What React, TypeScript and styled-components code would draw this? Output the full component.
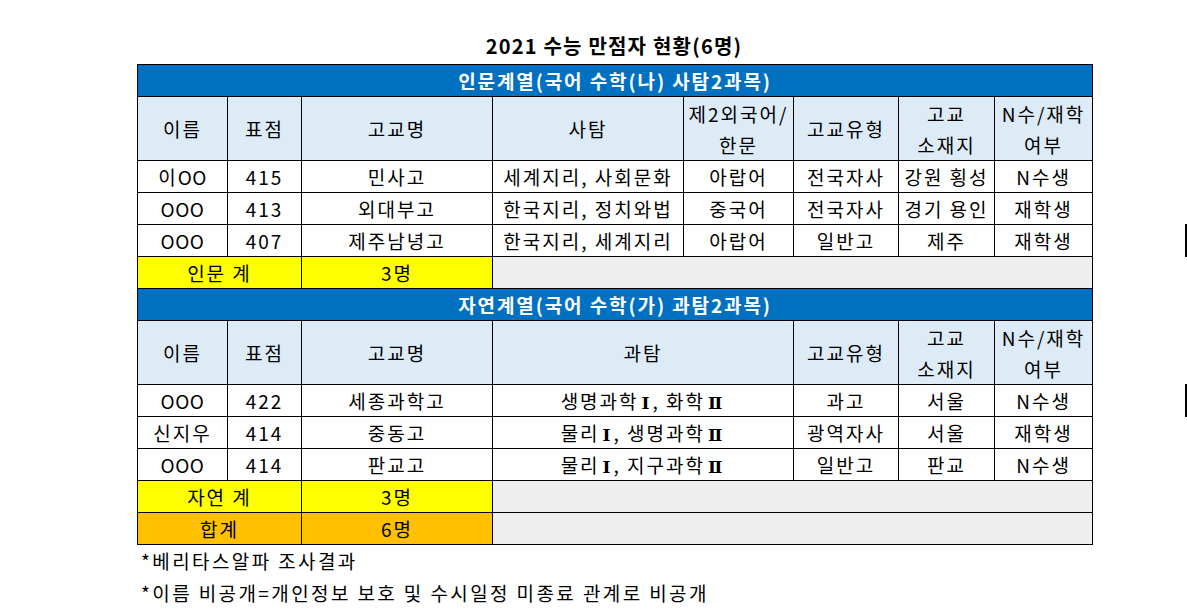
import { FunctionComponent, ReactNode } from "react";
import styled, { createGlobalStyle } from "styled-components";

const GlobalStyle = createGlobalStyle`
  html, body {
    margin: 0;
    padding: 0;
    background: #ffffff;
  }
  body {
    font-family: "Noto Sans CJK KR", "Noto Sans", sans-serif;
    color: #000000;
  }
`

const Page = styled.div`
  position: relative;
  width: 1187px;
  height: 609px;
  padding: 32px 0 0 137px;
  box-sizing: border-box;
`
const Title = styled.div`
  width: 954px;
  height: 32px;
  line-height: 28px;
  text-align: center;
  font-size: 20px;
  font-weight: 700;
  letter-spacing: 1.2px;
`
const Table = styled.table`
  width: 955px;
  border-collapse: collapse;
  table-layout: fixed;
  font-size: 19px;
  letter-spacing: 2px;
`
const Cell = styled.td<{ $bg?: string }>`
  height: 31px;
  padding: 0;
  border: 1px solid #000000;
  background: ${props => props.$bg || "#ffffff"};
  text-align: center;
  line-height: 30px;
  white-space: nowrap;
  overflow: hidden;
`
const Section = styled.td`
  height: 31px;
  padding: 0;
  border: 1px solid #000000;
  background: #0070c0;
  color: #ffffff;
  font-weight: 700;
  font-size: 19px;
  letter-spacing: 1.9px;
  text-align: center;
  line-height: 30px;
`
const Head = styled.td`
  height: 63px;
  padding: 0;
  border: 1px solid #000000;
  background: #ddebf7;
  text-align: center;
  line-height: 31px;
  white-space: nowrap;
`
const Latin = styled.span`
  letter-spacing: 0.5px;
`
const Numeral = styled.span`
  display: inline-block;
  height: 20px;
  line-height: 20px;
  vertical-align: baseline;
  font-family: "DejaVu Serif", "Liberation Serif", serif;
  font-weight: 600;
  font-size: 17px;
  letter-spacing: 0;
  padding: 0 3px;
`
const Note = styled.div`
  height: 32px;
  line-height: 32px;
  padding-left: 4px;
  font-size: 19px;
  letter-spacing: 2.4px;
`
const EdgeMark = styled.span<{ $top: number }>`
  position: absolute;
  left: 1185px;
  top: ${props => props.$top}px;
  width: 2px;
  height: 33px;
  background: #000000;
`

const widths = [90, 74, 191, 191, 110, 105, 96, 98];

const humanities: ReactNode[][] = [
  [<>이<Latin>OO</Latin></>, "415", "민사고", "세계지리, 사회문화", "아랍어", "전국자사", "강원 횡성", "N수생"],
  [<Latin>OOO</Latin>, "413", "외대부고", "한국지리, 정치와법", "중국어", "전국자사", "경기 용인", "재학생"],
  [<Latin>OOO</Latin>, "407", "제주남녕고", "한국지리, 세계지리", "아랍어", "일반고", "제주", "재학생"],
];

const I = <Numeral>Ⅰ</Numeral>;
const II = <Numeral>Ⅱ</Numeral>;

const science: ReactNode[][] = [
  [<Latin>OOO</Latin>, "422", "세종과학고", <>생명과학{I}, 화학{II}</>, "과고", "서울", "N수생"],
  ["신지우", "414", "중동고", <>물리{I}, 생명과학{II}</>, "광역자사", "서울", "재학생"],
  [<Latin>OOO</Latin>, "414", "판교고", <>물리{I}, 지구과학{II}</>, "일반고", "판교", "N수생"],
];

const SumRow: FunctionComponent<{ label: string, count: string, bg: string }> = (props) => (
  <tr>
    <Cell colSpan={2} $bg={props.bg}>{props.label}</Cell>
    <Cell $bg={props.bg}>{props.count}</Cell>
    <Cell colSpan={5} $bg="#eeeeee" />
  </tr>
)

const App: FunctionComponent = () => {
  return (
    <Page>
      <GlobalStyle/>
      <Title>2021 수능 만점자 현황(6명)</Title>
      <Table>
        <colgroup>
          {widths.map((w, i) => <col key={i} style={{ width: w }}/>)}
        </colgroup>
        <tbody>
          <tr><Section colSpan={8}>인문계열(국어 수학(나) 사탐2과목)</Section></tr>
          <tr>
            <Head>이름</Head>
            <Head>표점</Head>
            <Head>고교명</Head>
            <Head>사탐</Head>
            <Head>제2외국어/<br/>한문</Head>
            <Head>고교유형</Head>
            <Head>고교<br/>소재지</Head>
            <Head>N수/재학<br/>여부</Head>
          </tr>
          {humanities.map((row, i) => (
            <tr key={i}>
              {row.map((v, j) => <Cell key={j}>{v}</Cell>)}
            </tr>
          ))}
          <SumRow label="인문 계" count="3명" bg="#ffff00"/>
          <tr><Section colSpan={8}>자연계열(국어 수학(가) 과탐2과목)</Section></tr>
          <tr>
            <Head>이름</Head>
            <Head>표점</Head>
            <Head>고교명</Head>
            <Head colSpan={2}>과탐</Head>
            <Head>고교유형</Head>
            <Head>고교<br/>소재지</Head>
            <Head>N수/재학<br/>여부</Head>
          </tr>
          {science.map((row, i) => (
            <tr key={i}>
              {row.map((v, j) => <Cell key={j} colSpan={j === 3 ? 2 : 1}>{v}</Cell>)}
            </tr>
          ))}
          <SumRow label="자연 계" count="3명" bg="#ffff00"/>
          <SumRow label="합계" count="6명" bg="#ffc000"/>
        </tbody>
      </Table>
      <Note>*베리타스알파 조사결과</Note>
      <Note>*이름 비공개=개인정보 보호 및 수시일정 미종료 관계로 비공개</Note>
      <EdgeMark $top={224}/>
      <EdgeMark $top={384}/>
    </Page>
  )
}

export default App;
